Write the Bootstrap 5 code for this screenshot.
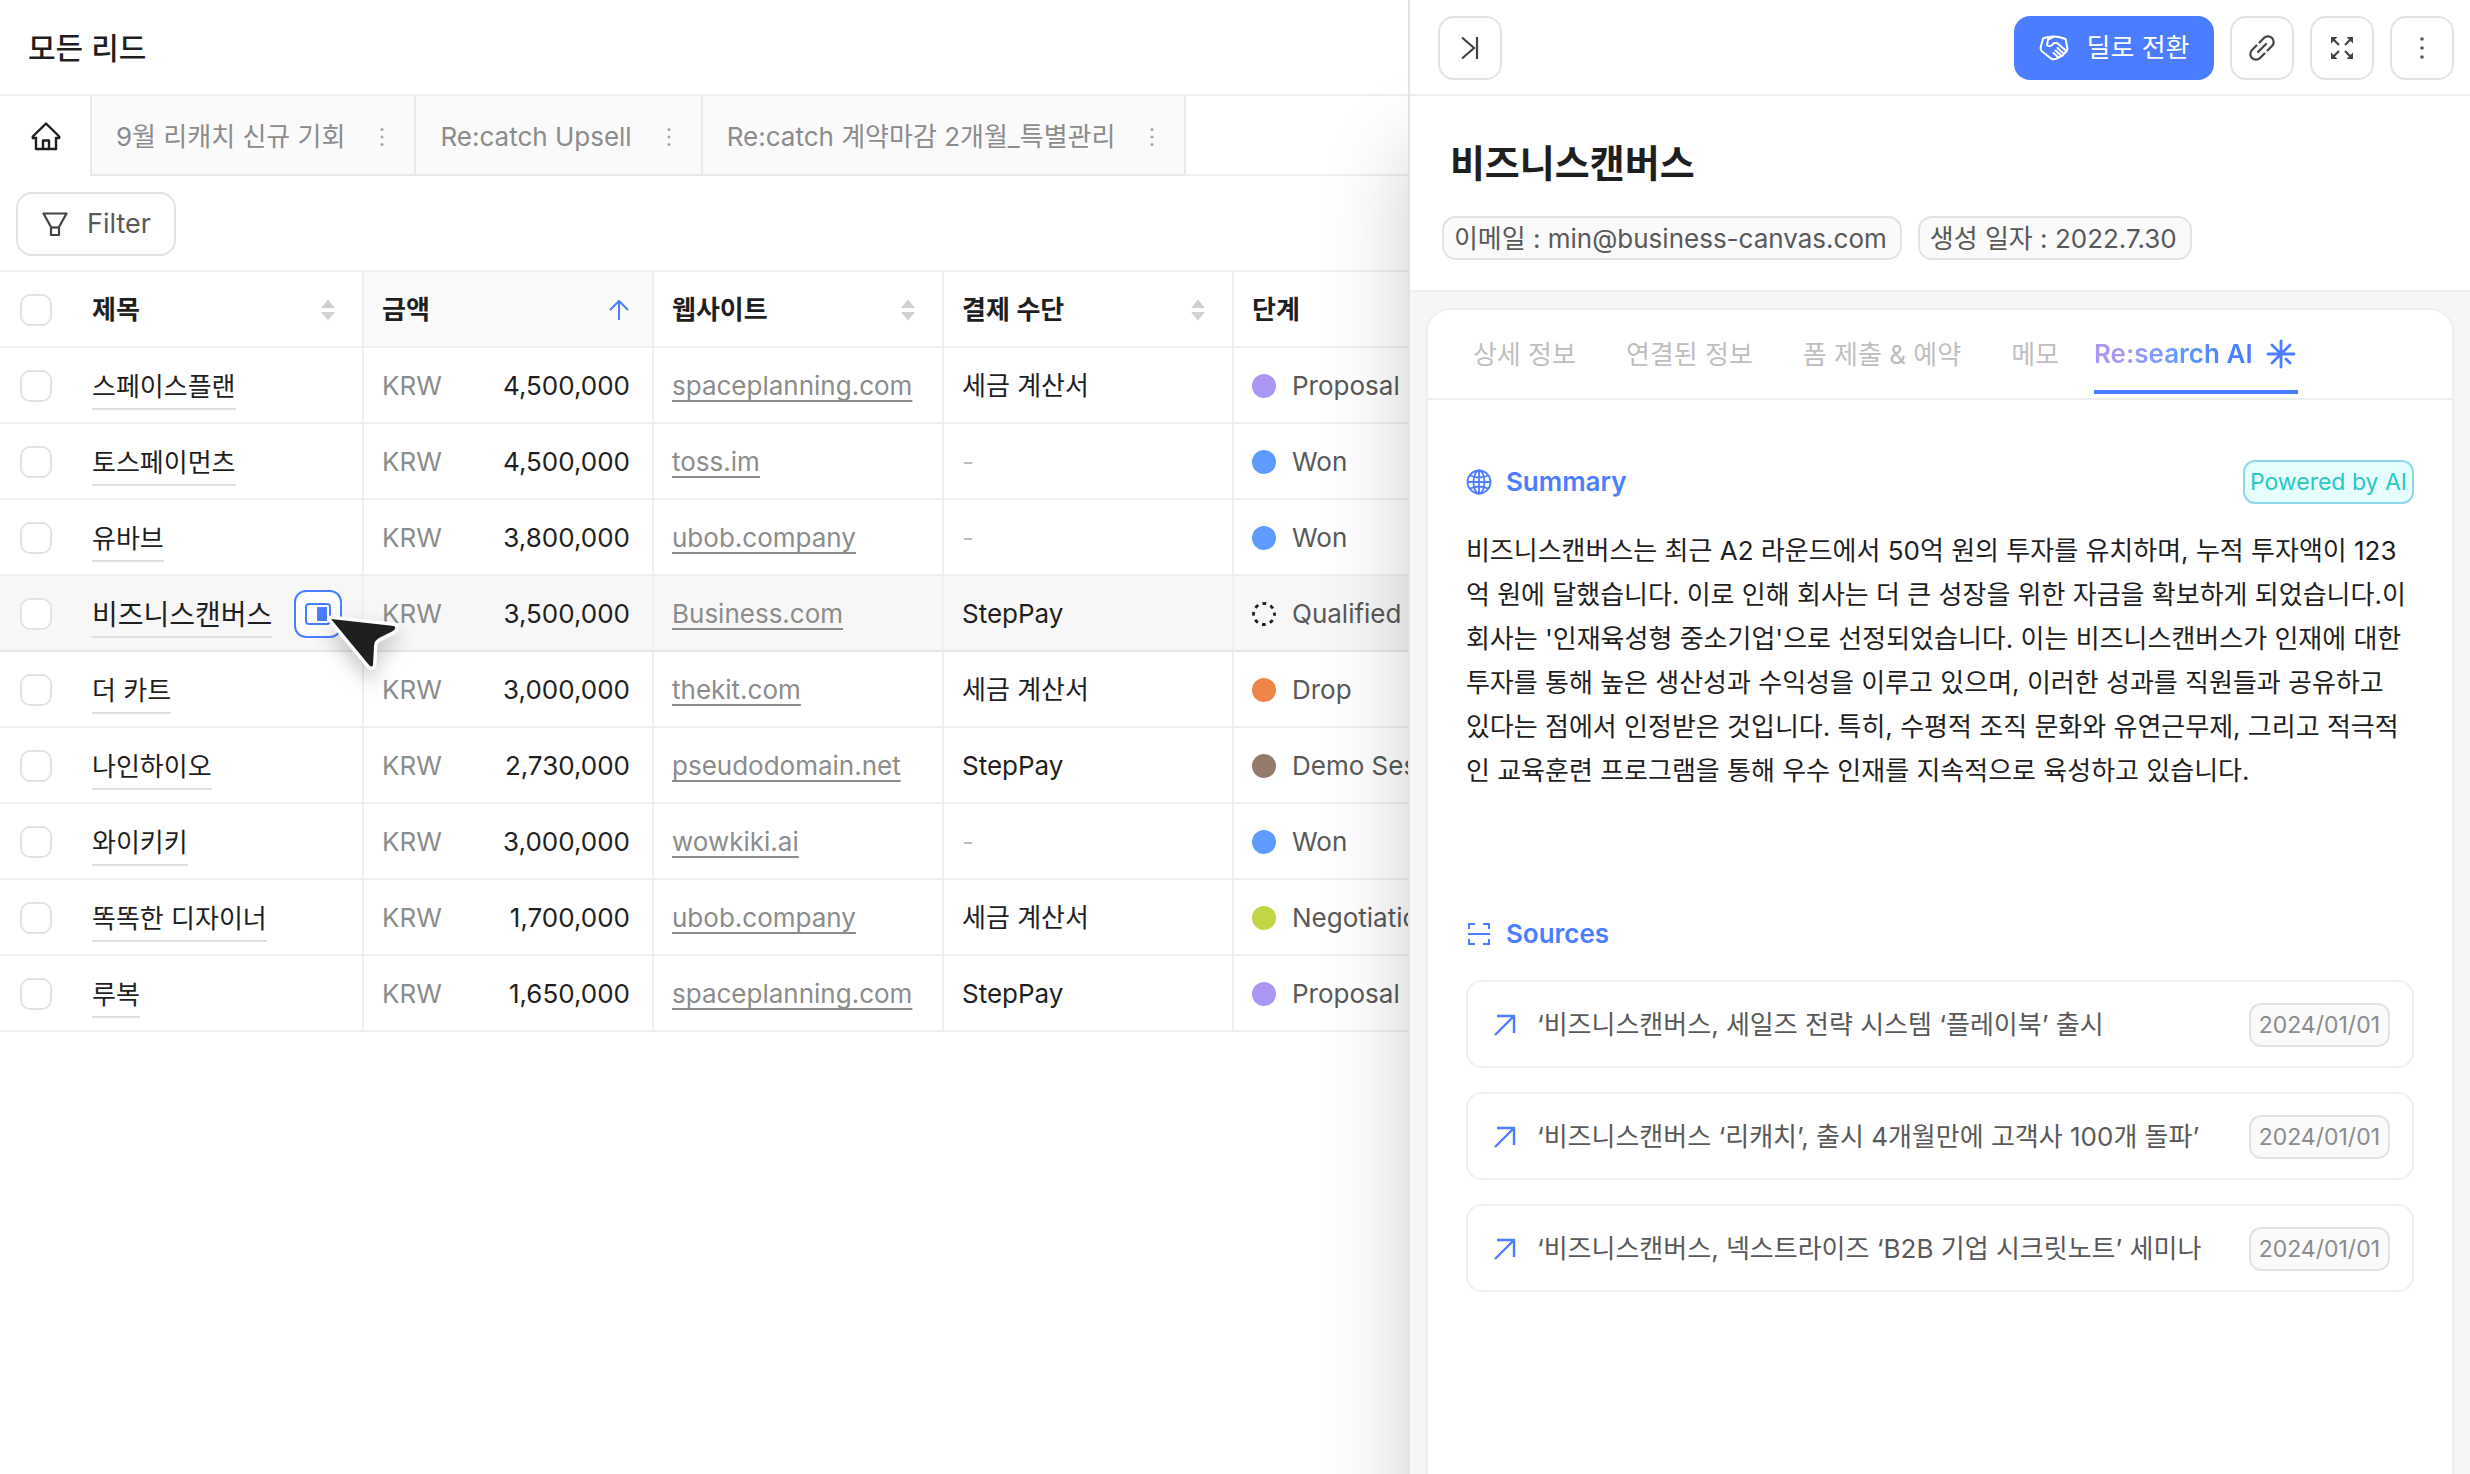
<!DOCTYPE html>
<html lang="ko">
<head>
<meta charset="utf-8">
<meta name="viewport" content="width=device-width, initial-scale=1">
<title>모든 리드</title>
<link href="https://cdn.jsdelivr.net/npm/bootstrap@5.3.0/dist/css/bootstrap.min.css" rel="stylesheet">
<style>
  :root { --ink:#1f1f1f; --ink-2:#595959; --ink-3:#8c8c8c; --ink-4:#bfbfbf; --line:#efefef; --line-2:#e3e3e3; --blue:#4a7dff; }
  body { font-family: Inter, "Noto Sans CJK KR", sans-serif; font-size: 26px; line-height: 44px; color: var(--ink); background: #fff; }
  a { text-decoration: none; color: inherit; }
  svg { flex: none; display: block; }
  .app-shell { min-height: 100vh; overflow: hidden; }
  .main-pane { min-width: 0; }
  .bar-top { height: 96px; padding-top: 2px; border-bottom: 2px solid var(--line); }
  .page-title { font-size: 30px; font-weight: 500; line-height: 44px; padding-left: 28px; }

  .view-tabs { height: 80px; }
  .view-home { width: 90px; padding-left: 2px; }
  .view-tab { background: #fafafa; color: var(--ink-3); padding: 4px 20px 0 24px; gap: 25px; border-left: 2px solid #e9e9e9; border-bottom: 2px solid #e9e9e9; white-space: nowrap; }
  .view-rest { border-left: 2px solid #e9e9e9; border-bottom: 2px solid var(--line); }
  .dots-btn { border: 0; background: none; padding: 0; color: #a6a6a6; }
  .tool-row { padding: 16px; height: 94px; }
  .outline-btn { height: 64px; border: 2px solid var(--line-2); border-radius: 16px; background: #fff; color: var(--ink-2); padding: 0 23px; gap: 18px; font-size: 27px; line-height: 44px; }
  .square-btn { width: 64px; padding: 0; }

  .lead-table { width: 1524px; table-layout: fixed; border-collapse: separate; border-spacing: 0; border-top: 2px solid var(--line); margin: 0; }
  .lead-table th, .lead-table td { height: 76px; padding: 2px 20px 0 18px; border-bottom: 2px solid var(--line); border-right: 2px solid var(--line); white-space: nowrap; vertical-align: middle; }
  .lead-table th { font-weight: 600; padding-right: 18px; }
  .lead-table .c-check { width: 74px; padding: 2px 0 0 20px; border-right: 0; }
  .lead-table .c-name { width: 290px; }
  .lead-table .c-col { width: 290px; }
  .lead-table .sorted { background: #fafafa; }
  .lead-table .on td { background: #f7f7f7; border-bottom-color: #e6e6e6; }
  .lead-table .on .name-link { font-size: 28px; }
  .amount { padding-right: 2px; }
  .form-check-input.tick { width: 32px; height: 32px; margin: 0; border: 2px solid var(--line-2); border-radius: 10px; display: block; background-color: #fff; }
  .name-link { display: block; width: fit-content; line-height: 42px; padding-top: 4px; border-bottom: 2px solid #e0e0e0; }
  .web-link { color: var(--ink-3); text-decoration: underline; text-decoration-thickness: 2px; text-underline-offset: 5px; text-decoration-skip-ink: none; }
  .currency { color: var(--ink-3); }
  .stage { color: var(--ink-2); gap: 16px; }
  .stage-dot { width: 24px; height: 24px; border-radius: 50%; flex: none; }
  .s-proposal { background: #ab97f3; } .s-won { background: #5c9bff; } .s-drop { background: #ee8447; }
  .s-demo { background: #947a6b; } .s-nego { background: #c2d544; }
  .none { color: var(--ink-4); }
  .open-btn { width: 48px; height: 48px; flex: none; border: 2px solid var(--blue); border-radius: 12px; background: #fff; padding: 0; }
  .pointer { position: absolute; left: 19px; top: 9px; z-index: 2; overflow: visible; filter: drop-shadow(0 10px 10px rgba(0,0,0,.22)); }

  .drawer { width: 43%; border-left: 2px solid var(--line-2); background: #f6f6f6; box-shadow: 0 150px 80px rgba(0,0,0,.2); z-index: 3; }
  .drawer .bar-top { padding: 2px 16px 0 28px; background: #fff; }
  .primary-btn { height: 64px; width: 200px; border-radius: 16px; background: var(--blue); color: #fff; border: 0; gap: 18px; padding: 0; }
  .company { padding: 35px 32px 0; height: 196px; background: #fff; border-bottom: 2px solid var(--line); }
  .company h2 { font-size: 38px; font-weight: 600; line-height: 64px; margin: 0 0 21px; padding-left: 8px; }
  .pill { height: 44px; line-height: 41px; border: 2px solid var(--line-2); border-radius: 14px; background: #fafafa; color: var(--ink-2); padding: 0 13px 0 10px; white-space: nowrap; }
  .sheet { margin: 16px 16px 0; background: #fff; border: 2px solid var(--line); border-bottom: 0; border-radius: 24px 24px 0 0; }
  .sheet-tabs { height: 90px; border-bottom: 2px solid var(--line); padding: 0 20px; color: var(--ink-4); white-space: nowrap; }
  .sheet-tabs a { padding: 0 25px; line-height: 90px; }
  .sheet-tabs a.current { padding: 8px 2px 0 0; margin-left: 10px; height: 84px; border-bottom: 4px solid var(--blue); font-weight: 600; gap: 13px; line-height: 44px; }
  .grad { background: linear-gradient(90deg, #ab97f3 20%, #5c9bff 55%, #4a7dff 85%); -webkit-background-clip: text; background-clip: text; color: transparent; }
  .sheet-body { padding: 60px 38px 0; }
  .section-title { color: var(--blue); font-size: 26px; font-weight: 600; line-height: 44px; margin: 0; gap: 14px; }
  .ai-badge { height: 44px; line-height: 40px; font-size: 23px; padding: 0 5px; border: 2px solid #8fd6ea; border-radius: 12px; background: #e6fffd; color: #2bc6c6; }
  .summary { margin: 25px 0 119px; white-space: nowrap; }
  .source { height: 88px; border: 2px solid var(--line); border-radius: 16px; padding: 2px 22px 0 25px; gap: 20px; color: var(--ink-2); white-space: nowrap; }
  .date-pill { height: 44px; line-height: 40px; font-size: 23px; border: 2px solid var(--line-2); border-radius: 12px; background: #fafafa; color: var(--ink-3); padding: 0 8px; }
</style>
</head>
<body>
<svg class="d-none" aria-hidden="true">
  <symbol id="dots" viewBox="0 0 24 24"><g fill="currentColor"><circle cx="12" cy="3" r="1.800"/><circle cx="12" cy="12" r="1.800"/><circle cx="12" cy="21" r="1.800"/></g></symbol>
  <symbol id="sort" viewBox="0 0 16 24"><path d="M8 1.500 15 10H1zM8 22.500 1 14h14z" fill="#d0d0d0"/></symbol>
  <symbol id="go" viewBox="0 0 24 24"><path d="M2 22 21 3M4 3h17v17" fill="none" stroke="#4a7dff" stroke-width="2.400"/></symbol>
</svg>
<div class="app-shell d-flex">
  <main class="main-pane flex-grow-1 overflow-hidden">
    <header class="bar-top d-flex align-items-center"><h1 class="page-title m-0">모든 리드</h1></header>
    <nav class="view-tabs d-flex">
      <a href="#" class="view-home d-flex align-items-center justify-content-center" aria-label="홈">
        <svg width="30" height="30" viewBox="0 0 30 30" fill="none" stroke="#1f1f1f" stroke-width="2.400" stroke-linejoin="round"><path d="M15 2.500 1.800 15.500V17H5v11h20V17h3.200v-1.500z"/><path d="M12 28v-8.500h6V28"/></svg>
      </a>
      <div class="view-tab d-flex align-items-center"><a href="#">9월 리캐치 신규 기회</a><button class="dots-btn" aria-label="메뉴"><svg width="24" height="20"><use href="#dots"/></svg></button></div>
      <div class="view-tab d-flex align-items-center"><a href="#">Re:catch Upsell</a><button class="dots-btn" aria-label="메뉴"><svg width="24" height="20"><use href="#dots"/></svg></button></div>
      <div class="view-tab d-flex align-items-center"><a href="#">Re:catch 계약마감 2개월_특별관리</a><button class="dots-btn" aria-label="메뉴"><svg width="24" height="20"><use href="#dots"/></svg></button></div>
      <div class="view-rest flex-grow-1"></div>
    </nav>
    <div class="tool-row">
      <button class="outline-btn d-flex align-items-center"><svg width="28" height="28" viewBox="0 0 28 28" fill="none" stroke="#434343" stroke-width="2.200" stroke-linejoin="round"><path d="M2.500 3.500h23L18 17v8h-8v-8z"/><path d="M10 17.500h8"/></svg>Filter</button>
    </div>
    <table class="lead-table">
      <thead>
        <tr>
          <th class="c-check"><input type="checkbox" class="form-check-input tick" aria-label="전체 선택"></th>
          <th class="c-name"><div class="d-flex align-items-center justify-content-between">제목<svg class="me-2" width="16" height="24"><use href="#sort"/></svg></div></th>
          <th class="c-col sorted"><div class="d-flex align-items-center justify-content-between">금액<svg class="me-1" width="22" height="22" viewBox="0 0 22 22" fill="none" stroke="#4a7dff" stroke-width="2"><path d="M11 21V2M2 11l9-9 9 9"/></svg></div></th>
          <th class="c-col"><div class="d-flex align-items-center justify-content-between">웹사이트<svg class="me-2" width="16" height="24"><use href="#sort"/></svg></div></th>
          <th class="c-col"><div class="d-flex align-items-center justify-content-between">결제 수단<svg class="me-2" width="16" height="24"><use href="#sort"/></svg></div></th>
          <th class="c-col">단계</th>
        </tr>
      </thead>
      <tbody>
        <tr><td class="c-check"><input type="checkbox" class="form-check-input tick" aria-label="스페이스플랜 선택"></td><td><a href="#" class="name-link">스페이스플랜</a></td><td><div class="amount d-flex justify-content-between"><span class="currency">KRW</span><span>4,500,000</span></div></td><td><a href="#" class="web-link">spaceplanning.com</a></td><td>세금 계산서</td><td><div class="stage d-flex align-items-center"><span class="stage-dot s-proposal"></span>Proposal</div></td></tr>
        <tr><td class="c-check"><input type="checkbox" class="form-check-input tick" aria-label="토스페이먼츠 선택"></td><td><a href="#" class="name-link">토스페이먼츠</a></td><td><div class="amount d-flex justify-content-between"><span class="currency">KRW</span><span>4,500,000</span></div></td><td><a href="#" class="web-link">toss.im</a></td><td class="none">-</td><td><div class="stage d-flex align-items-center"><span class="stage-dot s-won"></span>Won</div></td></tr>
        <tr><td class="c-check"><input type="checkbox" class="form-check-input tick" aria-label="유바브 선택"></td><td><a href="#" class="name-link">유바브</a></td><td><div class="amount d-flex justify-content-between"><span class="currency">KRW</span><span>3,800,000</span></div></td><td><a href="#" class="web-link">ubob.company</a></td><td class="none">-</td><td><div class="stage d-flex align-items-center"><span class="stage-dot s-won"></span>Won</div></td></tr>
        <tr class="on"><td class="c-check"><input type="checkbox" class="form-check-input tick" aria-label="비즈니스캔버스 선택"></td><td><div class="d-flex align-items-center justify-content-between"><a href="#" class="name-link">비즈니스캔버스</a><button class="open-btn position-relative d-flex align-items-center justify-content-center" aria-label="패널로 열기"><svg width="26" height="22" viewBox="0 0 26 22"><rect x="1" y="1" width="24" height="20" rx="3" fill="none" stroke="#4a7dff" stroke-width="2"/><path d="M12 4h10v14H12z" fill="#4a7dff"/></svg>
          <svg class="pointer" width="76" height="68" viewBox="0 0 76 68"><path d="M16 18 79 25Q82 27 78 30L66 36Q59 39 59 45L58 64Q57 67 54 64Z" fill="#1f1f1f" stroke="#fff" stroke-width="7" stroke-linejoin="round" paint-order="stroke"/></svg></button></div></td><td><div class="amount d-flex justify-content-between"><span class="currency">KRW</span><span>3,500,000</span></div></td><td><a href="#" class="web-link">Business.com</a></td><td>StepPay</td><td><div class="stage d-flex align-items-center"><svg width="24" height="24" viewBox="0 0 24 24"><circle cx="12" cy="12" r="10.500" fill="none" stroke="#1f1f1f" stroke-width="2.800" stroke-dasharray="3.800 4.450" stroke-dashoffset="1.900"/></svg>Qualified</div></td></tr>
        <tr><td class="c-check"><input type="checkbox" class="form-check-input tick" aria-label="더 카트 선택"></td><td><a href="#" class="name-link">더 카트</a></td><td><div class="amount d-flex justify-content-between"><span class="currency">KRW</span><span>3,000,000</span></div></td><td><a href="#" class="web-link">thekit.com</a></td><td>세금 계산서</td><td><div class="stage d-flex align-items-center"><span class="stage-dot s-drop"></span>Drop</div></td></tr>
        <tr><td class="c-check"><input type="checkbox" class="form-check-input tick" aria-label="나인하이오 선택"></td><td><a href="#" class="name-link">나인하이오</a></td><td><div class="amount d-flex justify-content-between"><span class="currency">KRW</span><span>2,730,000</span></div></td><td><a href="#" class="web-link">pseudodomain.net</a></td><td>StepPay</td><td><div class="stage d-flex align-items-center"><span class="stage-dot s-demo"></span>Demo Session</div></td></tr>
        <tr><td class="c-check"><input type="checkbox" class="form-check-input tick" aria-label="와이키키 선택"></td><td><a href="#" class="name-link">와이키키</a></td><td><div class="amount d-flex justify-content-between"><span class="currency">KRW</span><span>3,000,000</span></div></td><td><a href="#" class="web-link">wowkiki.ai</a></td><td class="none">-</td><td><div class="stage d-flex align-items-center"><span class="stage-dot s-won"></span>Won</div></td></tr>
        <tr><td class="c-check"><input type="checkbox" class="form-check-input tick" aria-label="똑똑한 디자이너 선택"></td><td><a href="#" class="name-link">똑똑한 디자이너</a></td><td><div class="amount d-flex justify-content-between"><span class="currency">KRW</span><span>1,700,000</span></div></td><td><a href="#" class="web-link">ubob.company</a></td><td>세금 계산서</td><td><div class="stage d-flex align-items-center"><span class="stage-dot s-nego"></span>Negotiation</div></td></tr>
        <tr><td class="c-check"><input type="checkbox" class="form-check-input tick" aria-label="루복 선택"></td><td><a href="#" class="name-link">루복</a></td><td><div class="amount d-flex justify-content-between"><span class="currency">KRW</span><span>1,650,000</span></div></td><td><a href="#" class="web-link">spaceplanning.com</a></td><td>StepPay</td><td><div class="stage d-flex align-items-center"><span class="stage-dot s-proposal"></span>Proposal</div></td></tr>
      </tbody>
    </table>
  </main>

  <aside class="drawer position-relative flex-shrink-0 d-flex flex-column">
    <div class="bar-top d-flex align-items-center gap-3">
      <button class="outline-btn square-btn d-flex align-items-center justify-content-center me-auto" aria-label="닫기"><svg width="24" height="24" viewBox="0 0 24 24" fill="none" stroke="#434343" stroke-width="2.200"><path d="M4 1.500 16 12 4 22.500M19 1v22"/></svg></button>
      <button class="primary-btn d-flex align-items-center justify-content-center"><svg width="30" height="26" viewBox="0 0 30 26" fill="none" stroke="#fff" stroke-width="2" stroke-linejoin="round" stroke-linecap="round"><path d="M7 2.500 4 3.500 1.500 13 2.500 16 12 23.500q3 1.500 5.500 0l6-3 4.500-5L28.500 14 26.500 4 20 2 14 1.500z"/><path d="M14 2 9 4.500 8 10q2 2.500 5 0l2-2h3l9.500 8M19.500 22.500 14.500 18M21.500 20l-5-4.500M24.500 18.500l-6-5.500"/></svg>딜로 전환</button>
      <button class="outline-btn square-btn d-flex align-items-center justify-content-center" aria-label="링크 복사"><svg width="26" height="26" viewBox="0 0 26 26" fill="none" stroke="#434343" stroke-width="2.200" stroke-linecap="round"><path d="M10.500 7.500 15 3a5.600 5.600 0 0 1 8 8l-4.500 4.500M15.500 18.500 11 23a5.600 5.600 0 0 1-8-8l4.500-4.500M9 17l8-8"/></svg></button>
      <button class="outline-btn square-btn d-flex align-items-center justify-content-center" aria-label="전체 화면"><svg width="24" height="24" viewBox="0 0 24 24" fill="#434343" stroke="#434343" stroke-width="2.200"><path d="M2 2l7 7M22 2l-7 7M2 22l7-7M22 22l-7-7"/><path stroke="none" d="M1 1h6.500L1 7.500zM23 1v6.500L16.500 1zM1 23v-6.500L7.500 23zM23 23h-6.500l6.500-6.500z"/></svg></button>
      <button class="outline-btn square-btn d-flex align-items-center justify-content-center" aria-label="더 보기"><svg width="24" height="24"><use href="#dots"/></svg></button>
    </div>
    <section class="company">
      <h2>비즈니스캔버스</h2>
      <div class="d-flex gap-3"><span class="pill">이메일 : min@business-canvas.com</span><span class="pill">생성 일자 : 2022.7.30</span></div>
    </section>
    <section class="sheet flex-grow-1">
      <nav class="sheet-tabs d-flex">
        <a href="#">상세 정보</a><a href="#">연결된 정보</a><a href="#">폼 제출 &amp; 예약</a><a href="#">메모</a>
        <a href="#" class="current d-flex align-items-center"><span class="grad">Re:search AI</span><svg width="30" height="30" viewBox="0 0 30 30" stroke="#4a7dff" stroke-width="2.800" stroke-linecap="round"><path d="M15 2v26M2 15h26M6 6l7 7M24 6l-7 7M6 24l7-7M24 24l-4-4"/></svg></a>
      </nav>
      <div class="sheet-body">
        <div class="d-flex align-items-center justify-content-between">
          <h3 class="section-title d-flex align-items-center"><svg width="26" height="26" viewBox="0 0 26 26" fill="none" stroke="#4a7dff" stroke-width="1.800"><circle cx="13" cy="13" r="11.500"/><ellipse cx="13" cy="13" rx="5.500" ry="11.500"/><path d="M1.500 13h23M13 1.500v23M4 6.500q9 4 18 0M4 19.500q9-4 18 0"/></svg>Summary</h3>
          <span class="ai-badge">Powered by AI</span>
        </div>
        <p class="summary">비즈니스캔버스는 최근 A2 라운드에서 50억 원의 투자를 유치하며, 누적 투자액이 123<br>억 원에 달했습니다. 이로 인해 회사는 더 큰 성장을 위한 자금을 확보하게 되었습니다.이<br>회사는 '인재육성형 중소기업'으로 선정되었습니다. 이는 비즈니스캔버스가 인재에 대한<br>투자를 통해 높은 생산성과 수익성을 이루고 있으며, 이러한 성과를 직원들과 공유하고<br>있다는 점에서 인정받은 것입니다. 특히, 수평적 조직 문화와 유연근무제, 그리고 적극적<br>인 교육훈련 프로그램을 통해 우수 인재를 지속적으로 육성하고 있습니다.</p>
        <h3 class="section-title d-flex align-items-center"><svg width="26" height="26" viewBox="0 0 26 26" fill="none" stroke="#4a7dff" stroke-width="2"><path d="M3 8V3h6M17 3h6v5M3 18v5h6M17 23h6v-5M2 13h22"/></svg>Sources</h3>
        <div class="d-flex flex-column gap-4 mt-4">
          <a href="#" class="source d-flex align-items-center"><svg width="24" height="24"><use href="#go"/></svg><span class="flex-grow-1">‘비즈니스캔버스, 세일즈 전략 시스템 ‘플레이북’ 출시</span><span class="date-pill">2024/01/01</span></a>
          <a href="#" class="source d-flex align-items-center"><svg width="24" height="24"><use href="#go"/></svg><span class="flex-grow-1">‘비즈니스캔버스 ‘리캐치’, 출시 4개월만에 고객사 100개 돌파’</span><span class="date-pill">2024/01/01</span></a>
          <a href="#" class="source d-flex align-items-center"><svg width="24" height="24"><use href="#go"/></svg><span class="flex-grow-1">‘비즈니스캔버스, 넥스트라이즈 ‘B2B 기업 시크릿노트’ 세미나</span><span class="date-pill">2024/01/01</span></a>
        </div>
      </div>
    </section>
  </aside>
</div>
<script src="https://cdn.jsdelivr.net/npm/bootstrap@5.3.0/dist/js/bootstrap.bundle.min.js"></script>
</body>
</html>
